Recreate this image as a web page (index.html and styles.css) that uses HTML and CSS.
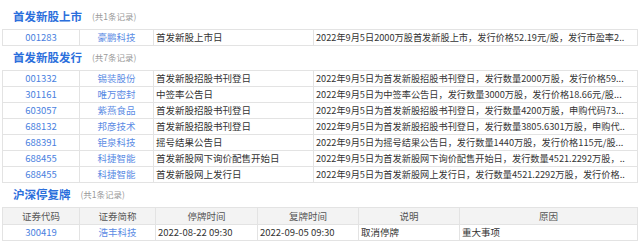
FILE: index.html
```html
<!DOCTYPE html>
<html lang="zh">
<head>
<meta charset="utf-8">
<link rel="stylesheet" href="styles.css">
</head>
<body>
<div class="page">
  <div class="sec-head"><span class="sec-title">首发新股上市</span><span class="sec-count">(共1条记录)</span></div>
  <table class="tbl">
    <colgroup><col class="c-code"><col class="c-name"><col class="c-event"><col></colgroup>
    <tr><td class="code">001283</td><td class="name">豪鹏科技</td><td class="txt">首发新股上市日</td><td class="txt desc">2022年9月5日2000万股首发新股上市，发行价格52.19元/股，发行市盈率2..</td></tr>
  </table>

  <div class="sec-head"><span class="sec-title">首发新股发行</span><span class="sec-count">(共7条记录)</span></div>
  <table class="tbl">
    <colgroup><col class="c-code"><col class="c-name"><col class="c-event"><col></colgroup>
    <tr><td class="code">001332</td><td class="name">锡装股份</td><td class="txt">首发新股招股书刊登日</td><td class="txt desc">2022年9月5日为首发新股招股书刊登日，发行数量2000万股，发行价格59...</td></tr>
    <tr><td class="code">301161</td><td class="name">唯万密封</td><td class="txt">中签率公告日</td><td class="txt desc">2022年9月5日为中签率公告日，发行数量3000万股，发行价格18.66元/股...</td></tr>
    <tr><td class="code">603057</td><td class="name">紫燕食品</td><td class="txt">首发新股招股书刊登日</td><td class="txt desc">2022年9月5日为首发新股招股书刊登日，发行数量4200万股，申购代码73...</td></tr>
    <tr><td class="code">688132</td><td class="name">邦彦技术</td><td class="txt">首发新股招股书刊登日</td><td class="txt desc">2022年9月5日为首发新股招股书刊登日，发行数量3805.6301万股，申购代..</td></tr>
    <tr><td class="code">688391</td><td class="name">钜泉科技</td><td class="txt">摇号结果公告日</td><td class="txt desc">2022年9月5日为摇号结果公告日，发行数量1440万股，发行价格115元/股...</td></tr>
    <tr><td class="code">688455</td><td class="name">科捷智能</td><td class="txt">首发新股网下询价配售开始日</td><td class="txt desc">2022年9月5日为首发新股网下询价配售开始日，发行数量4521.2292万股，..</td></tr>
    <tr><td class="code">688455</td><td class="name">科捷智能</td><td class="txt">首发新股网上发行日</td><td class="txt desc">2022年9月5日为首发新股网上发行日，发行数量4521.2292万股，发行价格..</td></tr>
  </table>

  <div class="sec-head"><span class="sec-title">沪深停复牌</span><span class="sec-count">(共1条记录)</span></div>
  <table class="tbl tbl3">
    <colgroup><col class="d-code"><col class="d-name"><col class="d-t1"><col class="d-t2"><col class="d-note"><col></colgroup>
    <tr class="th"><td>证券代码</td><td>证券简称</td><td>停牌时间</td><td>复牌时间</td><td>说明</td><td>原因</td></tr>
    <tr><td class="code">300419</td><td class="name">浩丰科技</td><td class="txt">2022-08-22 09:30</td><td class="txt">2022-09-05 09:30</td><td class="txt">取消停牌</td><td class="txt">重大事项</td></tr>
  </table>
</div>
</body>
</html>
```

FILE: styles.css
```css
html, body {
  margin: 0;
  padding: 0;
  background: #ffffff;
}
body {
  font-family: "Noto Sans CJK SC", "Noto Sans", sans-serif;
  color: #333333;
  font-size: 9.5px;
}
.page {
  padding: 5px 2px 0 2px;
}
.sec-head {
  height: 22px;
  line-height: 22px;
  margin-bottom: 2px;
  padding-left: 11px;
  display: flex;
  align-items: center;
  white-space: nowrap;
}
.sec-title {
  color: #2b6fdc;
  font-weight: bold;
  font-size: 11.5px;
}
.sec-count {
  color: #999999;
  font-size: 8.5px;
  margin-left: 10px;
}
.tbl {
  width: 636px;
  border-collapse: collapse;
  table-layout: fixed;
}
.tbl td {
  border: 1px solid #e3e3e3;
  height: 16px;
  padding: 0 2px;
  line-height: 15px;
  white-space: nowrap;
  overflow: hidden;
  text-overflow: ellipsis;
  box-sizing: border-box;
}
.desc {
  font-size: 9.2px;
}
.c-code { width: 77px; }
.c-name { width: 74px; }
.c-event { width: 160px; }
.d-code { width: 77px; }
.d-name { width: 76px; }
.d-t1 { width: 102px; }
.d-t2 { width: 101px; }
.d-note { width: 101px; }
.code {
  text-align: center;
  color: #4a7fe0;
}
.name {
  text-align: center;
  color: #5b8be4;
}
.txt {
  text-align: left;
  color: #333333;
}
.tbl3 .th td {
  background: #f3f3f3;
  text-align: center;
  color: #555555;
  height: 17px;
}
```
